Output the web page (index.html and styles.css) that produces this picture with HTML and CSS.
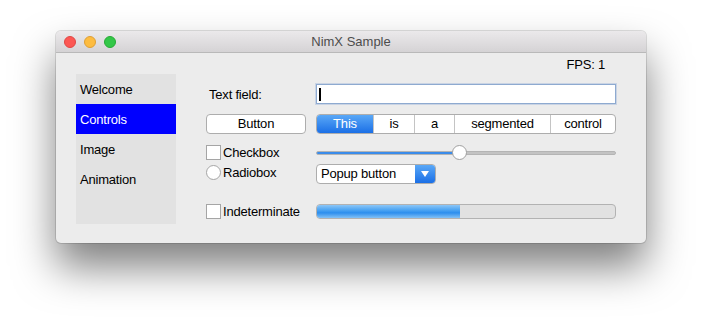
FILE: index.html
```html
<!DOCTYPE html>
<html>
<head>
    <meta charset="UTF-8">
    <title>NimX Sample</title>
    <link rel="stylesheet" href="styles.css">
</head>
<body>
    <div class="window">
        <div class="titlebar">
            <div class="lights">
                <span class="light red"></span>
                <span class="light yellow"></span>
                <span class="light green"></span>
            </div>
            <div class="title">NimX Sample</div>
        </div>

        <div class="content">
            <div class="fps">FPS: 1</div>

            <div class="main">
                <div class="sidebar">
                    <div class="item">Welcome</div>
                    <div class="item selected">Controls</div>
                    <div class="item">Image</div>
                    <div class="item">Animation</div>
                </div>

                <div class="controls">
                    <div class="row row-field">
                        <div class="col1 label">Text field:</div>
                        <div class="textfield"><span class="caret"></span></div>
                    </div>

                    <div class="row row-buttons">
                        <div class="col1 button">Button</div>
                        <div class="segmented">
                            <div class="seg active seg-this">This</div>
                            <div class="seg seg-is">is</div>
                            <div class="seg seg-a">a</div>
                            <div class="seg seg-segmented">segmented</div>
                            <div class="seg seg-control">control</div>
                        </div>
                    </div>

                    <div class="row row-check">
                        <div class="col1 check"><span class="box"></span>Checkbox</div>
                        <div class="slider">
                            <div class="track"><div class="fill" style="width: 143px"></div></div>
                            <div class="knob" style="left: 136px"></div>
                        </div>
                    </div>

                    <div class="row row-radio">
                        <div class="col1 check radio"><span class="box round"></span>Radiobox</div>
                        <div class="popup">
                            <span class="popup-text">Popup button</span>
                            <span class="popup-arrow"></span>
                        </div>
                    </div>

                    <div class="row row-progress">
                        <div class="col1 check"><span class="box"></span>Indeterminate</div>
                        <div class="progress"><div class="bar" style="width: 143px"></div></div>
                    </div>
                </div>
            </div>
        </div>
    </div>
</body>
</html>
```

FILE: styles.css
```css
html {
    background: #ffffff;
}
body {
    margin: 0;
    padding: 31px 0 0 56px;
    min-height: 324px;
    box-sizing: border-box;
    font-family: 'Liberation Sans', Arial, sans-serif;
    font-size: 13px;
    letter-spacing: -0.2px;
    color: #000;
}
.window {
    width: 590px;
    height: 212px;
    background: #ececec;
    border-radius: 5px;
    box-shadow: 0 24px 42px rgba(0, 0, 0, 0.5), 0 0 0 1px rgba(0, 0, 0, 0.12);
    overflow: hidden;
}
.titlebar {
    height: 21px;
    background: linear-gradient(#ebe9eb, #d5d3d5);
    border-bottom: 1px solid #b9b9b9;
    display: flex;
    align-items: center;
    position: relative;
}
.lights {
    display: flex;
    gap: 8px;
    padding-left: 8px;
}
.light {
    width: 12px;
    height: 12px;
    border-radius: 50%;
    box-sizing: border-box;
}
.red { background: #fc5753; border: 1px solid #df4744; }
.yellow { background: #fdbc40; border: 1px solid #de9f34; }
.green { background: #33c748; border: 1px solid #27aa35; }
.title {
    position: absolute;
    left: 0;
    right: 0;
    text-align: center;
    color: #4d4d4d;
    line-height: 21px;
    letter-spacing: 0;
}
.fps {
    height: 21px;
    box-sizing: border-box;
    padding: 4px 41px 0 0;
    text-align: right;
    line-height: 15px;
}
.main {
    display: flex;
    padding-left: 20px;
    gap: 30px;
}
.sidebar {
    width: 100px;
    height: 150px;
    background: #e2e2e2;
}
.item {
    height: 30px;
    line-height: 31px;
    padding-left: 4px;
}
.item.selected {
    background: #0000ff;
    color: #fff;
}
.controls {
    display: flex;
    flex-direction: column;
}
.row {
    display: flex;
    gap: 10px;
    align-items: center;
}
.col1 {
    width: 100px;
    flex: none;
}
.row-field { margin-top: 10px; height: 20px; }
.row-buttons { margin-top: 10px; height: 20px; }
.row-check { margin-top: 11px; height: 15px; }
.row-radio { margin-top: 4px; height: 20px; align-items: flex-start; }
.row-progress { margin-top: 20px; height: 15px; }

.label {
    padding-left: 3px;
    box-sizing: border-box;
}
.textfield {
    width: 300px;
    height: 20px;
    box-sizing: border-box;
    background: #fff;
    border: 1px solid #8eaad0;
    box-shadow: 0 0 0 1px rgba(140, 170, 215, 0.35);
    padding: 3px 0 0 2px;
}
.caret {
    display: block;
    width: 2px;
    height: 13px;
    background: #000;
}
.button {
    height: 20px;
    box-sizing: border-box;
    background: #fff;
    border: 1px solid #adadad;
    border-radius: 4px;
    text-align: center;
    line-height: 18px;
}
.segmented {
    width: 300px;
    height: 20px;
    box-sizing: border-box;
    display: flex;
    background: #fff;
    border: 1px solid #adadad;
    border-radius: 4px;
    overflow: hidden;
}
.seg {
    text-align: center;
    line-height: 18px;
    border-left: 1px solid #c4c4c4;
}
.seg.active {
    background: linear-gradient(#5aa8f7, #1b6fe6);
    color: #fff;
    border-left: none;
}
.seg-this { width: 56px; }
.seg-is { width: 40px; }
.seg-a { width: 39px; }
.seg-segmented { width: 95px; }
.seg-control { flex: 1; }

.check {
    display: flex;
    align-items: center;
    gap: 2px;
}
.radio { margin-top: 1px; }
.box {
    width: 15px;
    height: 15px;
    box-sizing: border-box;
    background: #fff;
    border: 1px solid #a5a5a5;
    flex: none;
}
.box.round {
    border-radius: 50%;
}
.slider {
    width: 300px;
    height: 15px;
    position: relative;
    display: flex;
    align-items: center;
}
.track {
    width: 100%;
    height: 4px;
    background: #c3c3c3;
    border: 1px solid #b4b4b4;
    box-sizing: border-box;
    border-radius: 2px;
    overflow: hidden;
}
.fill {
    height: 100%;
    background: #3b8cea;
}
.knob {
    position: absolute;
    top: 0;
    width: 15px;
    height: 15px;
    box-sizing: border-box;
    border-radius: 50%;
    background: #fff;
    border: 1px solid #a0a0a0;
}
.popup {
    width: 120px;
    height: 20px;
    box-sizing: border-box;
    display: flex;
    background: #fff;
    border: 1px solid #adadad;
    border-radius: 4px;
    overflow: hidden;
}
.popup-text {
    flex: 1;
    padding-left: 4px;
    line-height: 18px;
}
.popup-arrow {
    width: 20px;
    background: linear-gradient(#5aa8f7, #1b6fe6);
    display: flex;
    align-items: center;
    justify-content: center;
}
.popup-arrow::after {
    content: '';
    border-left: 4px solid transparent;
    border-right: 4px solid transparent;
    border-top: 6px solid #fff;
}
.progress {
    width: 300px;
    height: 15px;
    box-sizing: border-box;
    background: #e1e1e1;
    border: 1px solid #b2b2b2;
    border-radius: 4px;
    overflow: hidden;
}
.bar {
    height: 100%;
    background: linear-gradient(#8cc6f7, #4aa3f2 40%, #2c8eee 60%, #83c1f6);
}
```
